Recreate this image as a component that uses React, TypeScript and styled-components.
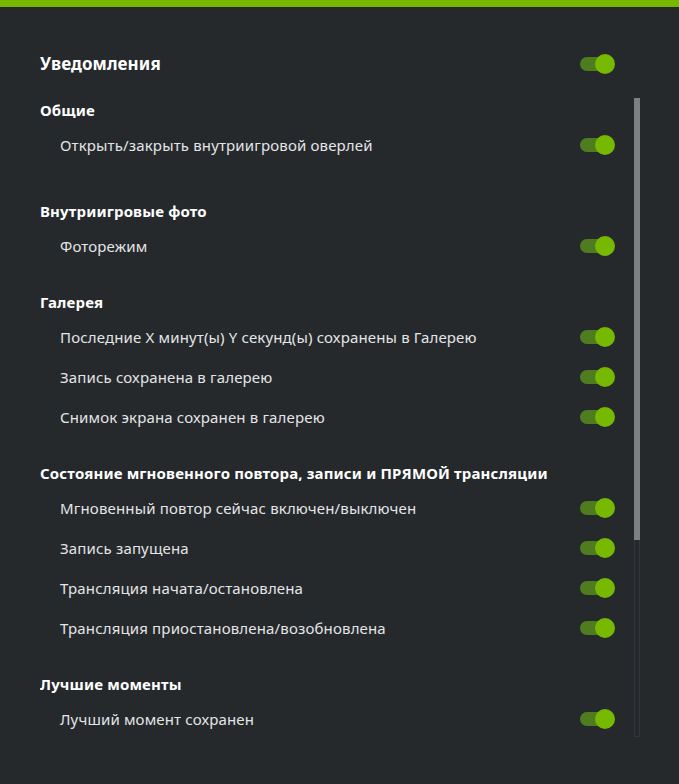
import React, { useLayoutEffect, useRef, useState } from "react";
import styled, { createGlobalStyle } from "styled-components";

interface Option {
  id: string;
  label: string;
}
interface Section {
  id: string;
  title: string;
  options: Option[];
}

const SECTIONS: Section[] = [
  {
    id: "general",
    title: "Общие",
    options: [{ id: "overlay", label: "Открыть/закрыть внутриигровой оверлей" }],
  },
  {
    id: "photo",
    title: "Внутриигровые фото",
    options: [{ id: "photomode", label: "Фоторежим" }],
  },
  {
    id: "gallery",
    title: "Галерея",
    options: [
      {
        id: "instant",
        label: "Последние X минут(ы) Y секунд(ы) сохранены в Галерею",
      },
      { id: "record", label: "Запись сохранена в галерею" },
      { id: "screenshot", label: "Снимок экрана сохранен в галерею" },
    ],
  },
  {
    id: "state",
    title: "Состояние мгновенного повтора, записи и ПРЯМОЙ трансляции",
    options: [
      { id: "replay", label: "Мгновенный повтор сейчас включен/выключен" },
      { id: "rec", label: "Запись запущена" },
      { id: "broadcast", label: "Трансляция начата/остановлена" },
      { id: "pause", label: "Трансляция приостановлена/возобновлена" },
    ],
  },
  {
    id: "highlights",
    title: "Лучшие моменты",
    options: [{ id: "best", label: "Лучший момент сохранен" }],
  },
];

const GlobalStyle = createGlobalStyle`
  html, body {
    margin: 0;
    padding: 0;
    background: #25292c;
  }
  body {
    font-family: "Noto Sans", "Open Sans", sans-serif;
  }
`;

const Toggle: React.FC<{ on: boolean; onClick: () => void }> = ({
  on,
  onClick,
}) => (
  <Switch type="button" on={on} onClick={onClick}>
    <Knob on={on} />
  </Switch>
);

const App: React.FC = () => {
  const [master, setMaster] = useState<boolean>(true);
  const [values, setValues] = useState<Record<string, boolean>>({});
  const listRef = useRef<HTMLDivElement>(null);
  const [thumb, setThumb] = useState({ top: 0, height: 442 });

  const flip = (id: string): void =>
    setValues((prev) => ({ ...prev, [id]: prev[id] === false }));

  // keep the fake scrollbar in sync with the list
  const syncThumb = (): void => {
    const el = listRef.current;
    if (!el) return;
    const ratio = el.clientHeight / el.scrollHeight;
    setThumb({
      top: el.scrollTop * ratio,
      height: Math.round(el.clientHeight * ratio),
    });
  };
  useLayoutEffect(syncThumb, []);

  return (
    <>
      <GlobalStyle />
      <Page>
        <AccentBar />
        <Panel>
          <Header>
            <Title>Уведомления</Title>
            <Toggle on={master} onClick={() => setMaster(!master)} />
          </Header>
          <ScrollFrame>
            <List ref={listRef} onScroll={syncThumb}>
              {SECTIONS.map((section, i) => (
                <Group key={section.id} first={i === 0}>
                  <GroupTitle>{section.title}</GroupTitle>
                  {section.options.map((opt) => (
                    <OptionRow key={opt.id}>
                      <OptionLabel>{opt.label}</OptionLabel>
                      <Toggle
                        on={values[opt.id] !== false}
                        onClick={() => flip(opt.id)}
                      />
                    </OptionRow>
                  ))}
                </Group>
              ))}
            </List>
            <ScrollTrack>
              <ScrollThumb
                style={{ transform: `translateY(${thumb.top}px)`, height: thumb.height }}
              />
            </ScrollTrack>
          </ScrollFrame>
        </Panel>
      </Page>
    </>
  );
};

const Page = styled.div`
  width: 679px;
  height: 784px;
  background: #25292c;
  display: flex;
  flex-direction: column;
  overflow: hidden;
`;

const AccentBar = styled.div`
  height: 7px;
  background: #76b900;
  flex-shrink: 0;
`;

const Panel = styled.div`
  display: flex;
  flex-direction: column;
  padding: 41px 39px 0 40px;
`;

const Header = styled.div`
  display: flex;
  align-items: center;
  justify-content: space-between;
  height: 31px;
  padding-right: 25px;
  margin-bottom: 19px;
`;

const Title = styled.span`
  color: #ffffff;
  font-size: 17px;
  font-weight: 700;
  letter-spacing: 0.1px;
`;

const ScrollFrame = styled.div`
  display: flex;
  height: 639px;
`;

const List = styled.div`
  flex: 1;
  overflow-y: auto;
  padding-right: 19px;
  scrollbar-width: none;

  &::-webkit-scrollbar {
    display: none;
  }
  &::after {
    content: "";
    display: block;
    height: 259px;
  }
`;

const ScrollTrack = styled.div`
  width: 6px;
  flex-shrink: 0;
  box-sizing: border-box;
  border: 1px solid #33373b;
  position: relative;
`;

const ScrollThumb = styled.div`
  position: absolute;
  top: -1px;
  left: -1px;
  width: 6px;
  background: #7e7f80;
`;

const Group = styled.section<{ first: boolean }>`
  margin-bottom: ${(p) => (p.first ? "34px" : "24px")};
`;

const GroupTitle = styled.h3`
  margin: 0 0 3px;
  height: 24px;
  line-height: 24px;
  color: #ffffff;
  font-size: 15px;
  font-weight: 700;
  letter-spacing: 0.15px;
  white-space: nowrap;
`;

const OptionRow = styled.div`
  display: flex;
  align-items: center;
  justify-content: space-between;
  height: 40px;
  padding-left: 20px;
`;

const OptionLabel = styled.span`
  color: #e4e5e6;
  font-size: 15px;
  letter-spacing: 0.15px;
`;

const Switch = styled.button<{ on: boolean }>`
  position: relative;
  width: 35px;
  height: 20px;
  padding: 0;
  border: none;
  background: transparent;
  cursor: pointer;
  flex-shrink: 0;

  &::before {
    content: "";
    position: absolute;
    left: 0;
    top: 3px;
    width: 30px;
    height: 14px;
    border-radius: 7px;
    background: ${(p) => (p.on ? "#4f7c1f" : "#55595d")};
  }
`;

const Knob = styled.span<{ on: boolean }>`
  position: absolute;
  top: 0;
  left: ${(p) => (p.on ? "15px" : "0")};
  width: 20px;
  height: 20px;
  border-radius: 50%;
  background: ${(p) => (p.on ? "#76b900" : "#b5b5b5")};
`;

export default App;
